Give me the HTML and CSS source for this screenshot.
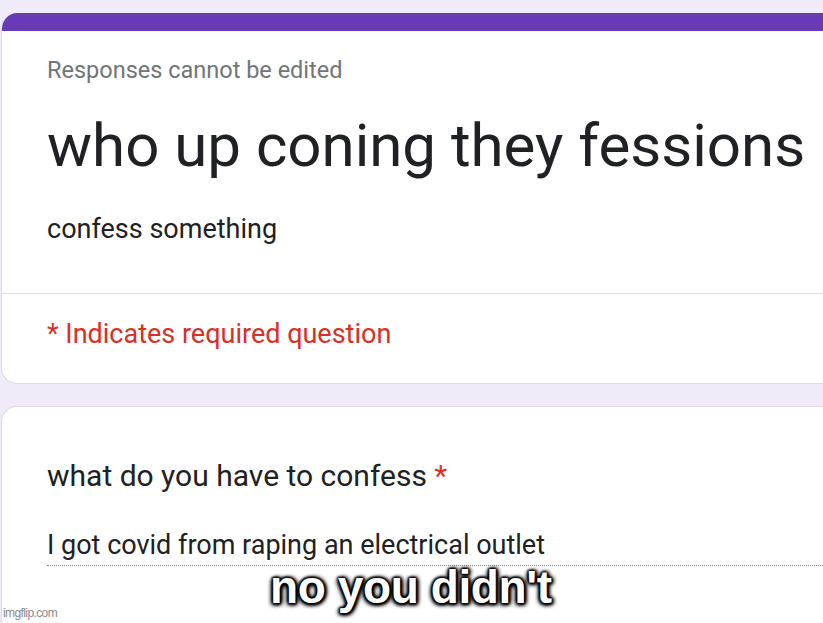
FILE: index.html
```html
<!DOCTYPE html>
<html>
<head>
<meta charset="utf-8">
<link rel="stylesheet" href="styles.css">
</head>
<body>
<div class="page">
  <section class="card header-card">
    <div class="accent"></div>
    <div class="header-top">
      <div class="notice">Responses cannot be edited</div>
      <h1 class="title">who up coning they fessions</h1>
      <div class="desc">confess something</div>
    </div>
    <div class="header-bottom">
      <div class="required">* Indicates required question</div>
    </div>
  </section>
  <section class="card question-card">
    <div class="question">what do you have to confess <span class="star">*</span></div>
    <div class="answer">I got covid from raping an electrical outlet</div>
  </section>
</div>
<div class="caption">no you didn't</div>
<div class="watermark">imgflip.com</div>
</body>
</html>
```
FILE: styles.css
```css
html, body {
  margin: 0;
  padding: 0;
  width: 823px;
  height: 623px;
  overflow: hidden;
  background: #f0ebf8;
  font-family: Roboto, "Liberation Sans", sans-serif;
}
.page {
  padding-top: 13px;
  padding-left: 1px;
  display: flex;
  flex-direction: column;
  gap: 22px;
  width: 822px;
  overflow: hidden;
}
.card {
  background: #fff;
  border: 1px solid #dadce0;
  border-right: none;
  border-radius: 16px 0 0 16px;
  width: 822px;
  box-sizing: border-box;
}
.header-card {
  height: 371px;
  overflow: hidden;
  display: flex;
  flex-direction: column;
  border-top: none;
}
.accent {
  height: 18px;
  background: #673ab7;
  flex: none;
}
.header-top {
  padding: 25px 0 0 45px;
  height: 263px;
  border-bottom: 1px solid #dadce0;
  box-sizing: border-box;
  flex: none;
}
.notice {
  font-size: 23.5px;
  color: #70757a;
  line-height: 28px;
}
.title {
  margin: 27px 0 0;
  font-weight: 400;
  font-size: 60px;
  line-height: 70px;
  color: #202124;
  white-space: nowrap;
}
.desc {
  margin-top: 32px;
  font-size: 27px;
  line-height: 32px;
  color: #202124;
}
.header-bottom {
  padding: 24px 0 0 45px;
}
.required {
  font-size: 27px;
  line-height: 32px;
  color: #d93025;
}
.question-card {
  height: 217px;
  padding: 51px 0 0 45px;
  border-bottom: none;
  border-radius: 16px 0 0 0;
}
.question {
  font-size: 30px;
  line-height: 36px;
  color: #202124;
}
.star {
  color: #d93025;
}
.answer {
  margin-top: 35px;
  font-size: 27px;
  line-height: 32px;
  color: #202124;
  padding-bottom: 4px;
  border-bottom: 1px dotted #80868b;
}
.caption {
  position: absolute;
  left: 270px;
  top: 561px;
  font-family: "Liberation Sans", Arial, sans-serif;
  font-weight: bold;
  font-size: 46px;
  line-height: 52px;
  color: #fff;
  letter-spacing: -0.4px;
  text-shadow: 0 0 2px #000, 0 0 2px #000, 0 0 3px #000, 1px 1px 3px #000, -1px -1px 3px #000, 2px 2px 4px #000, -2px 2px 4px #000, 2px -1px 4px #000;
}
.watermark {
  position: absolute;
  left: 3px;
  top: 606px;
  font-family: "Liberation Sans", Arial, sans-serif;
  font-size: 12px;
  color: #8a8a8a;
  letter-spacing: -0.6px;
}
```
